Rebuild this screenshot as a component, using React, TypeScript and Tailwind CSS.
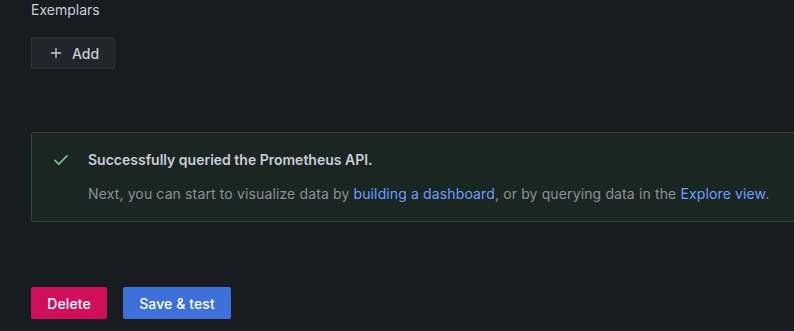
import React from 'react';

const PlusIcon = () => (
  <svg width="16" height="16" viewBox="0 0 24 24" fill="none" stroke="currentColor" strokeWidth="2" strokeLinecap="round">
    <path d="M12 5v14M5 12h14" />
  </svg>
);

const CheckIcon = () => (
  <svg width="18" height="18" viewBox="0 0 24 24" fill="none" stroke="#6ccf8e" strokeWidth="2" strokeLinecap="round" strokeLinejoin="round">
    <path d="M4 12.5l5 5L20 6.5" />
  </svg>
);

const App: React.FC = () => {
  return (
    <div
      className="w-[794px] h-[331px] overflow-hidden bg-[#181b1f] text-[#ccccdc] text-[14px]"
      style={{ fontFamily: 'Inter, "Noto Sans", sans-serif' }}
    >
      <div className="pl-[31px]">
        {/* Exemplars */}
        <div className="leading-[20px] font-normal">Exemplars</div>
        <button className="mt-[17px] h-[32px] w-[84px] flex items-center gap-2 pl-[16px] rounded-[2px] bg-[#22252b] border border-[#2f3237] text-[#ccccdc] font-medium">
          <PlusIcon />
          <span>Add</span>
        </button>

        {/* Success alert */}
        <div className="mt-[63px] w-[800px] h-[90px] bg-[#1a2622] border border-[#2c4a35] rounded-[2px] flex pl-[20px] pt-[17px]">
          <div className="w-[18px] mt-[1px]">
            <CheckIcon />
          </div>
          <div className="ml-[18px]">
            <div className="leading-[20px] font-semibold text-[#ccccdc]">
              Successfully queried the Prometheus API.
            </div>
            <div className="mt-[14px] leading-[20px] text-[#8e9099] tracking-[0.13px]">
              Next, you can start to visualize data by{' '}
              <span className="text-[#6e9fff]">building a dashboard</span>, or by querying data in the{' '}
              <span className="text-[#6e9fff]">Explore view</span>.
            </div>
          </div>
        </div>

        {/* Actions */}
        <div className="mt-[65px] flex gap-4">
          <button className="h-[32px] w-[76px] rounded-[2px] bg-[#d10e5c] text-white font-medium tracking-[0.1px]">Delete</button>
          <button className="h-[32px] w-[108px] rounded-[2px] bg-[#3d71d9] text-white font-medium tracking-[0.1px]">Save &amp; test</button>
        </div>
      </div>
    </div>
  );
};

export default App;
